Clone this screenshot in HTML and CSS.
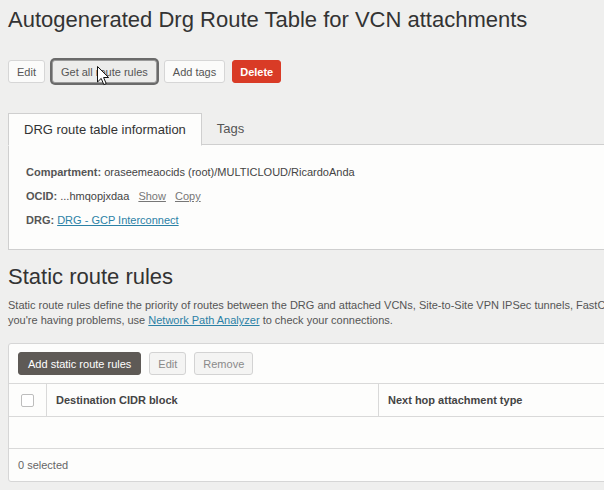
FILE: index.html
```html
<!DOCTYPE html>
<html lang="en">
    <head>
        <meta charset="UTF-8">
        <meta name="viewport" content="width=device-width, initial-scale=1.0">
        <title>Autogenerated Drg Route Table for VCN attachments</title>
        <link rel="stylesheet" href="styles.css">
    </head>
    <body>
        <div class="page">
            <h1 class="page-title">Autogenerated Drg Route Table for VCN attachments</h1>

            <div class="actions">
                <button class="btn">Edit</button>
                <button class="btn btn-focus">Get all route rules</button>
                <button class="btn">Add tags</button>
                <button class="btn btn-danger">Delete</button>
                <svg class="cursor" width="13" height="20" viewBox="0 0 13 20">
                    <path d="M0.5 0.5 L0.5 16 L4.2 12.4 L6.8 18.6 L9.2 17.6 L6.6 11.5 L11.6 11.5 Z" fill="#fff" stroke="#111" stroke-width="1" stroke-linejoin="round"/>
                </svg>
            </div>

            <div class="tabs">
                <div class="tab-bar">
                    <div class="tab active">DRG route table information</div>
                    <div class="tab">Tags</div>
                </div>
                <div class="info">
                    <div class="info-row"><span class="label">Compartment:</span> oraseemeaocids (root)/MULTICLOUD/RicardoAnda</div>
                    <div class="info-row"><span class="label">OCID:</span> ...hmqopjxdaa <a href="#" class="small-link">Show</a> <a href="#" class="small-link">Copy</a></div>
                    <div class="info-row"><span class="label">DRG:</span> <a href="#" class="link">DRG - GCP Interconnect</a></div>
                </div>
            </div>

            <h2 class="section-title">Static route rules</h2>
            <p class="desc">
                <span class="line">Static route rules define the priority of routes between the DRG and attached VCNs, Site-to-Site VPN IPSec tunnels, FastConnect virtual circuits, and remote peering connections. If</span>
                <span class="line">you're having problems, use <a href="#" class="link">Network Path Analyzer</a> to check your connections.</span>
            </p>

            <div class="table-panel">
                <div class="toolbar">
                    <button class="btn btn-primary">Add static route rules</button>
                    <button class="btn btn-disabled">Edit</button>
                    <button class="btn btn-disabled">Remove</button>
                </div>
                <table class="rules">
                    <thead>
                        <tr>
                            <th class="col-check"><span class="checkbox"></span></th>
                            <th class="col-cidr">Destination CIDR block</th>
                            <th>Next hop attachment type</th>
                        </tr>
                    </thead>
                    <tbody>
                        <tr class="empty-row">
                            <td colspan="3"></td>
                        </tr>
                    </tbody>
                </table>
                <div class="table-footer">0 selected</div>
            </div>
        </div>
    </body>
</html>
```

FILE: styles.css
```css
html, body {
    overflow: hidden;
}
body {
    margin: 0;
    padding: 7px 0 0 8px;
    background-color: #efefee;
    font-family: "Liberation Sans", Arial, sans-serif;
    font-size: 11px;
    color: #444;
}
.page {
    width: 780px;
}
.page-title {
    margin: 0;
    font-size: 22px;
    line-height: 26px;
    font-weight: normal;
    color: #333;
}
.actions {
    position: relative;
    display: flex;
    gap: 7px;
    margin-top: 27px;
}
.btn {
    height: 23px;
    padding: 0 8px;
    font-family: inherit;
    font-size: 11px;
    color: #555;
    background-color: #fbfbfa;
    border: 1px solid #d6d6d6;
    border-radius: 3px;
}
.btn-focus {
    background-color: #ececeb;
    box-shadow: 0 0 0 2px #6a6a6a;
    border-color: #9a9a9a;
}
.btn-danger {
    padding: 0 7px;
    background-color: #d93b26;
    border-color: #d93b26;
    color: #fff;
    font-weight: bold;
}
.cursor {
    position: absolute;
    left: 89px;
    top: 6px;
}
.tabs {
    margin-top: 30px;
}
.tab-bar {
    display: flex;
    height: 31px;
    border-bottom: 1px solid #cfcfcf;
}
.tab {
    padding: 0 15px;
    font-size: 13px;
    line-height: 31px;
    color: #555;
}
.tab.active {
    height: 31px;
    margin-bottom: -1px;
    padding: 0 15px;
    border: 1px solid #cfcfcf;
    border-bottom: 1px solid #fdfdfc;
    background-color: #fdfdfc;
    color: #333;
}
.info {
    padding: 15px 17px 17px;
    background-color: #fdfdfc;
    border: 1px solid #cfcfcf;
    border-top: none;
}
.info-row {
    line-height: 24px;
    white-space: nowrap;
}
.label {
    font-weight: bold;
    color: #555;
}
.small-link {
    margin-left: 6px;
    color: #777;
}
.link {
    color: #2b81a6;
}
.section-title {
    margin: 14px 0 0;
    font-size: 22px;
    line-height: 26px;
    font-weight: normal;
    color: #333;
}
.desc {
    margin: 8px 0 15px;
    line-height: 15px;
    color: #555;
}
.desc .line {
    display: block;
    white-space: nowrap;
}
.table-panel {
    background-color: #fdfdfc;
    border: 1px solid #d6d6d6;
    border-radius: 3px;
}
.toolbar {
    display: flex;
    gap: 8px;
    padding: 8px 9px;
}
.toolbar .btn {
    padding: 0 8px;
}
.toolbar .btn-primary {
    padding: 0 9px;
}
.btn-primary {
    background-color: #5e5a56;
    border-color: #5e5a56;
    color: #fff;
}
.btn-disabled {
    background-color: #f4f4f3;
    border-color: #d3d3d3;
    color: #8a8a8a;
}
.rules {
    width: 100%;
    border-collapse: collapse;
}
.rules th {
    height: 32px;
    padding: 0 9px;
    text-align: left;
    font-size: 11px;
    font-weight: bold;
    color: #444;
    border-top: 1px solid #d9d9d9;
    border-bottom: 1px solid #d9d9d9;
    border-left: 1px solid #d9d9d9;
}
.rules th.col-check {
    width: 37px;
    padding: 0;
    text-align: center;
    border-left: none;
}
.rules th.col-cidr {
    width: 313px;
}
.checkbox {
    display: inline-block;
    width: 11px;
    height: 11px;
    margin-top: 3px;
    border: 1px solid #bdbdbd;
    border-radius: 2px;
    background-color: #fff;
}
.empty-row td {
    height: 31px;
    padding: 0;
    border-bottom: 1px solid #d9d9d9;
}
.table-footer {
    height: 32px;
    padding-left: 9px;
    line-height: 32px;
    color: #666;
}
```
